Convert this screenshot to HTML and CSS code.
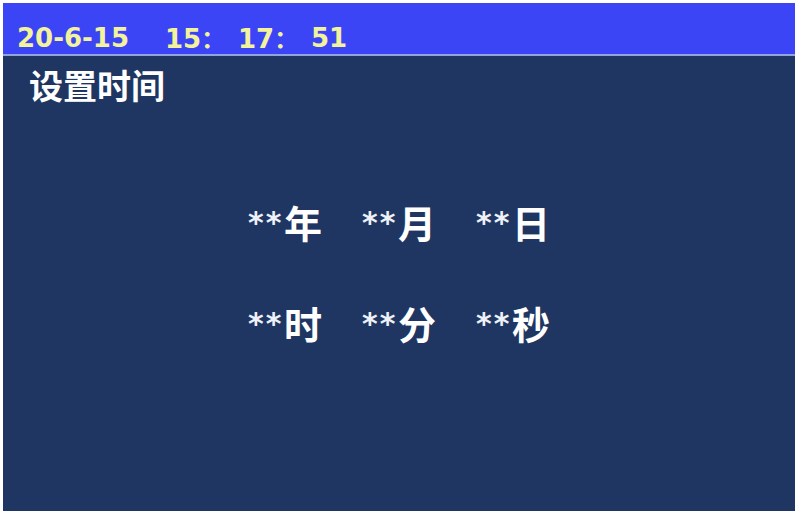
FILE: index.html
```html
<!DOCTYPE html>
<html lang="zh">
<head>
<meta charset="utf-8">
<title>设置时间</title>
<link rel="stylesheet" href="styles.css">
</head>
<body>
<div class="screen">
  <div class="header">
    <span class="date">20-6-15</span>
    <span class="seg">15<span class="colon">：</span></span>
    <span class="seg">17<span class="colon">：</span></span>
    <span class="seg">51</span>
  </div>
  <div class="title">设置时间</div>
  <div class="fields">
    <div class="cell"><span class="stars">**</span><span class="unit">年</span></div>
    <div class="cell"><span class="stars">**</span><span class="unit">月</span></div>
    <div class="cell"><span class="stars">**</span><span class="unit">日</span></div>
    <div class="cell"><span class="stars">**</span><span class="unit">时</span></div>
    <div class="cell"><span class="stars">**</span><span class="unit">分</span></div>
    <div class="cell"><span class="stars">**</span><span class="unit">秒</span></div>
  </div>
</div>
</body>
</html>
```
FILE: styles.css
```css
html, body {
  margin: 0;
  padding: 0;
  background: #ffffff;
}
body {
  padding: 3px 0 0 3px;
}
.screen {
  width: 792px;
  height: 508px;
  background: #1f3662;
  display: flex;
  flex-direction: column;
  overflow: hidden;
}
.header {
  background: #3c45f6;
  border-bottom: 2px solid #93a3dc;
  display: flex;
  align-items: flex-start;
  padding: 20px 0 0 14px;
  height: 31px;
  font-family: "DejaVu Sans", "Noto Sans CJK SC", sans-serif;
  font-weight: bold;
  font-size: 26px;
  line-height: 30px;
  color: #f3f39c;
}
.date {
  width: 148px;
}
.seg {
  width: 73px;
  white-space: nowrap;
}
.colon {
  font-family: "Noto Sans CJK SC", sans-serif;
  font-weight: bold;
  font-size: 24px;
}
.title {
  margin: 12px 0 0 26px;
  font-family: "Noto Sans CJK SC", sans-serif;
  font-weight: bold;
  font-size: 34px;
  line-height: 34px;
  color: #ffffff;
}
.fields {
  margin: 101px 0 0 245px;
  display: grid;
  grid-template-columns: 114px 114px 114px;
  row-gap: 63px;
}
.cell {
  display: flex;
  align-items: flex-start;
  height: 38px;
  color: #ffffff;
}
.stars {
  font-family: "DejaVu Sans", sans-serif;
  font-weight: bold;
  font-size: 30px;
  line-height: 30px;
  letter-spacing: 2px;
  color: #eef1f8;
  margin-top: 5px;
  width: 36px;
}
.unit {
  font-family: "Noto Sans CJK SC", sans-serif;
  font-weight: bold;
  font-size: 38px;
  line-height: 38px;
}
```
